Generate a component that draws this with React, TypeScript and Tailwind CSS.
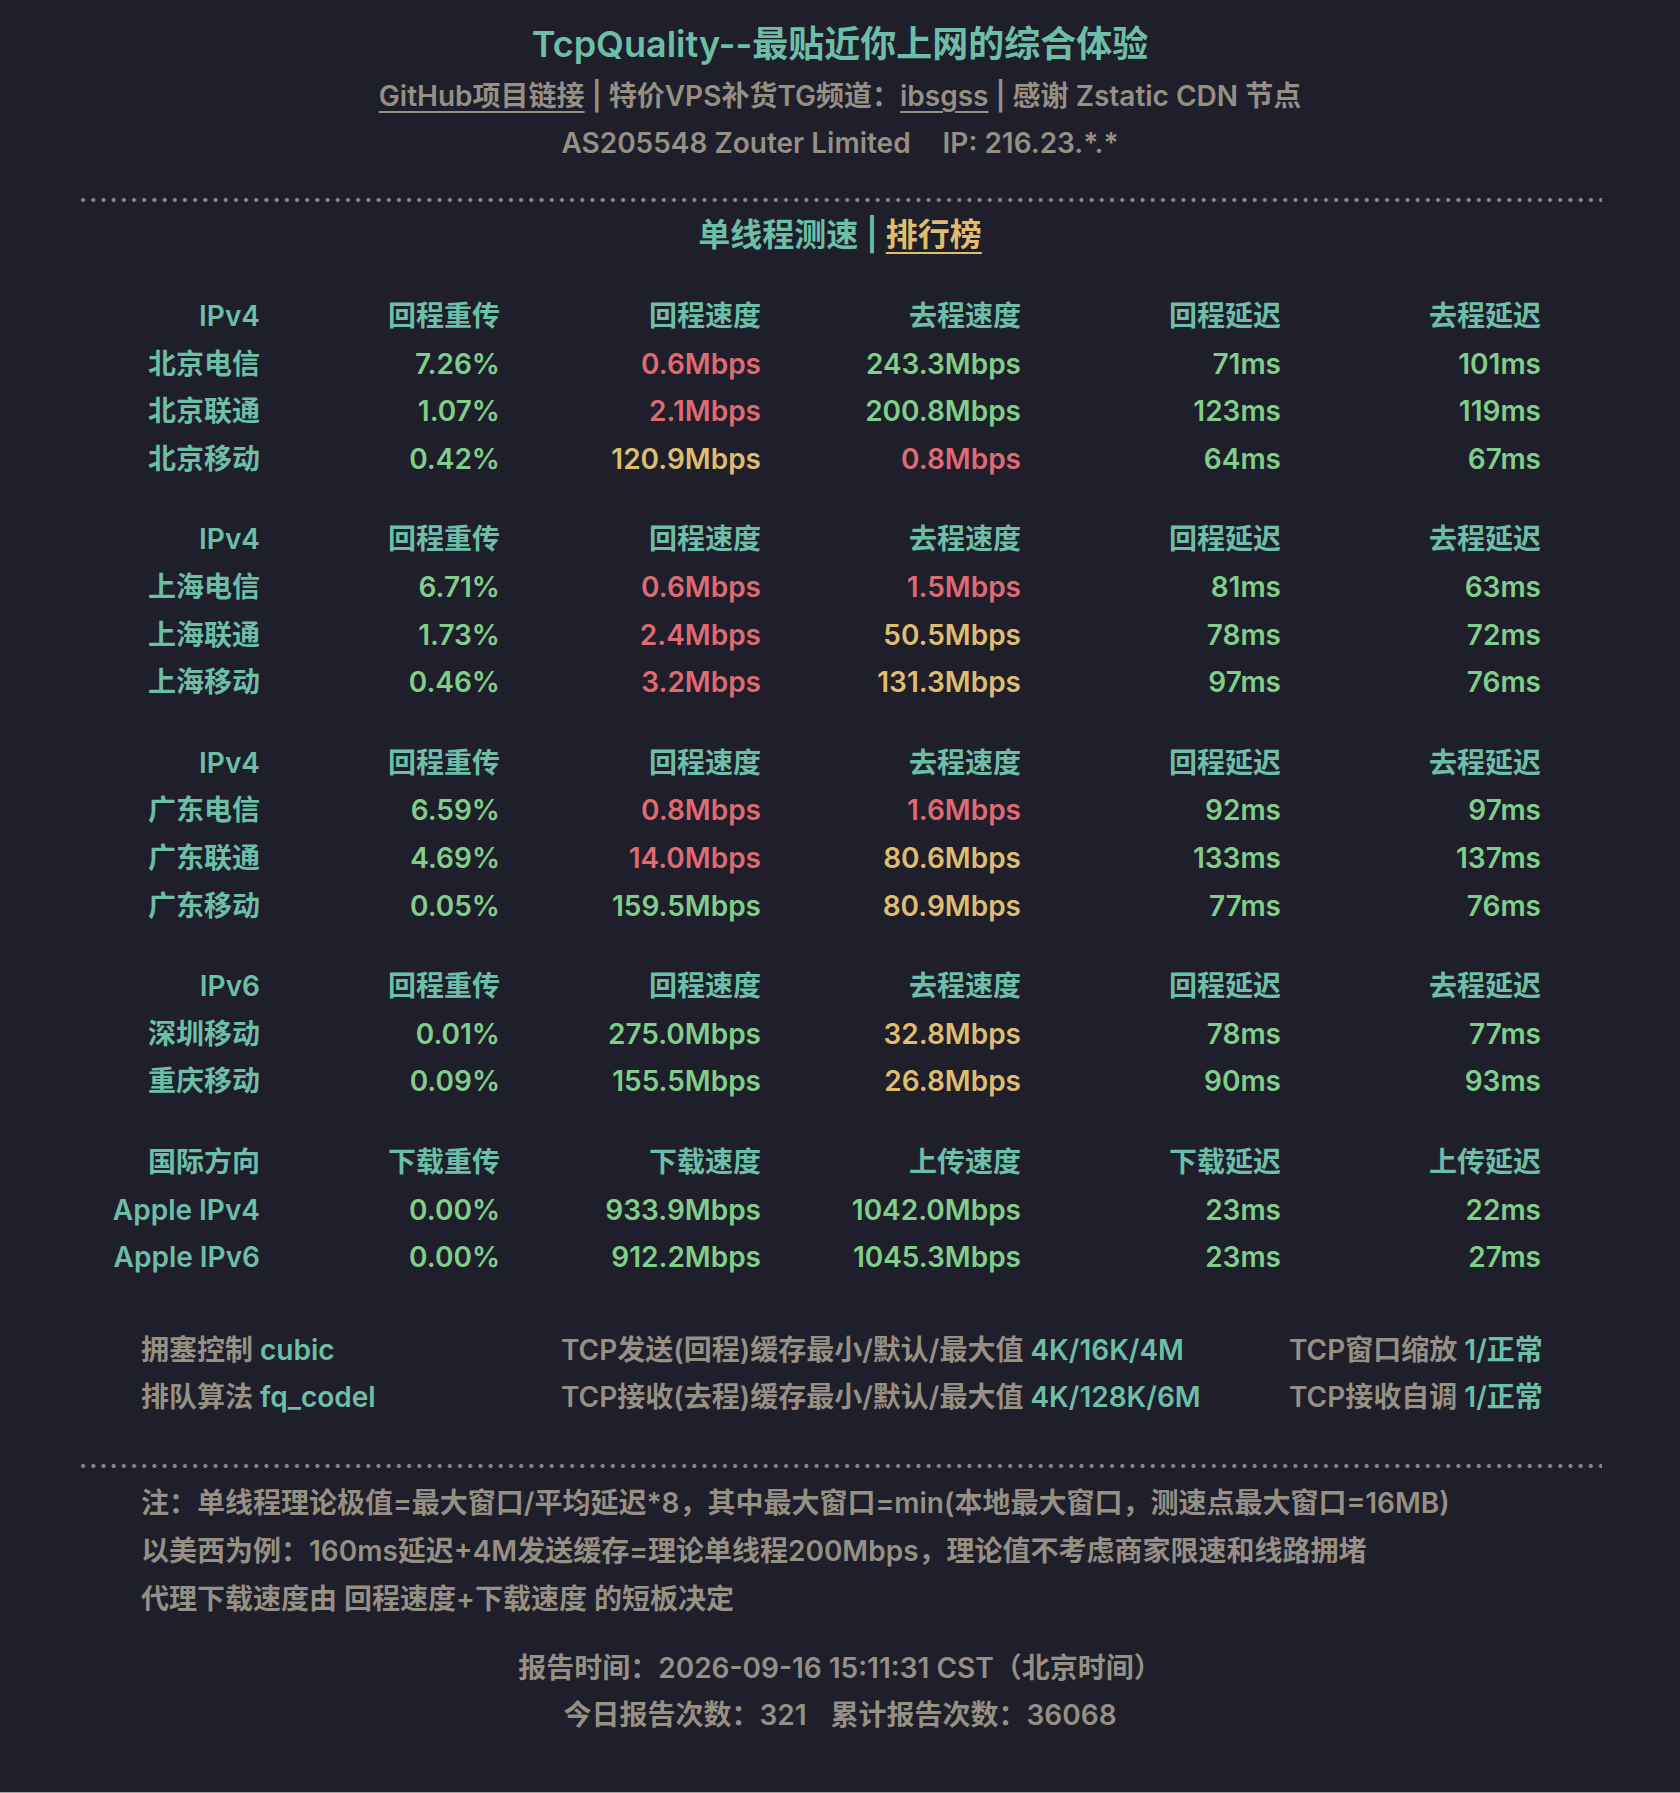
import React from "react";

type Tone = "g" | "r" | "y";

type Row = { name: string; cells: [string, Tone][] };

type Group = { head: string[]; rows: Row[] };

const toneClass: Record<Tone, string> = {
  g: "text-[#7fcf88]",
  r: "text-[#df6a72]",
  y: "text-[#dfbd6f]",
};

const speedHead = ["回程重传", "回程速度", "去程速度", "回程延迟", "去程延迟"];

const groups: Group[] = [
  {
    head: ["IPv4", ...speedHead],
    rows: [
      { name: "北京电信", cells: [["7.26%", "g"], ["0.6Mbps", "r"], ["243.3Mbps", "g"], ["71ms", "g"], ["101ms", "g"]] },
      { name: "北京联通", cells: [["1.07%", "g"], ["2.1Mbps", "r"], ["200.8Mbps", "g"], ["123ms", "g"], ["119ms", "g"]] },
      { name: "北京移动", cells: [["0.42%", "g"], ["120.9Mbps", "y"], ["0.8Mbps", "r"], ["64ms", "g"], ["67ms", "g"]] },
    ],
  },
  {
    head: ["IPv4", ...speedHead],
    rows: [
      { name: "上海电信", cells: [["6.71%", "g"], ["0.6Mbps", "r"], ["1.5Mbps", "r"], ["81ms", "g"], ["63ms", "g"]] },
      { name: "上海联通", cells: [["1.73%", "g"], ["2.4Mbps", "r"], ["50.5Mbps", "y"], ["78ms", "g"], ["72ms", "g"]] },
      { name: "上海移动", cells: [["0.46%", "g"], ["3.2Mbps", "r"], ["131.3Mbps", "y"], ["97ms", "g"], ["76ms", "g"]] },
    ],
  },
  {
    head: ["IPv4", ...speedHead],
    rows: [
      { name: "广东电信", cells: [["6.59%", "g"], ["0.8Mbps", "r"], ["1.6Mbps", "r"], ["92ms", "g"], ["97ms", "g"]] },
      { name: "广东联通", cells: [["4.69%", "g"], ["14.0Mbps", "r"], ["80.6Mbps", "y"], ["133ms", "g"], ["137ms", "g"]] },
      { name: "广东移动", cells: [["0.05%", "g"], ["159.5Mbps", "g"], ["80.9Mbps", "y"], ["77ms", "g"], ["76ms", "g"]] },
    ],
  },
  {
    head: ["IPv6", ...speedHead],
    rows: [
      { name: "深圳移动", cells: [["0.01%", "g"], ["275.0Mbps", "g"], ["32.8Mbps", "y"], ["78ms", "g"], ["77ms", "g"]] },
      { name: "重庆移动", cells: [["0.09%", "g"], ["155.5Mbps", "g"], ["26.8Mbps", "y"], ["90ms", "g"], ["93ms", "g"]] },
    ],
  },
  {
    head: ["国际方向", "下载重传", "下载速度", "上传速度", "下载延迟", "上传延迟"],
    rows: [
      { name: "Apple IPv4", cells: [["0.00%", "g"], ["933.9Mbps", "g"], ["1042.0Mbps", "g"], ["23ms", "g"], ["22ms", "g"]] },
      { name: "Apple IPv6", cells: [["0.00%", "g"], ["912.2Mbps", "g"], ["1045.3Mbps", "g"], ["23ms", "g"], ["27ms", "g"]] },
    ],
  },
];

const Dots = ({ className = "" }: { className?: string }) => (
  <div
    className={`h-[4px] w-full bg-[radial-gradient(circle,#8a857c_1.8px,transparent_2.2px)] bg-[length:10.2px_4px] bg-left ${className}`}
  />
);

const gridCols = "grid grid-cols-[182px_240px_261px_260px_260px_260px] text-right leading-[47.6px]";

const App = () => (
  <div className="h-[1793px] border-b border-[#a3a3a3] bg-[#1f1e2b] font-['Inter','Noto_Sans_CJK_SC',sans-serif] font-semibold text-[#968f84]">
    <div className="mx-auto w-[1524px] pt-4">
      <header className="text-center">
        <h1 className="text-[36px] leading-[56px] font-semibold text-[#6cbea6]">TcpQuality--最贴近你上网的综合体验</h1>
        <p className="text-[28px] leading-[48px]">
          <a className="underline underline-offset-[5px] decoration-2">GitHub项目链接</a> | 特价VPS补货TG频道：
          <a className="underline underline-offset-[5px] decoration-2">ibsgss</a> | 感谢 Zstatic CDN 节点
        </p>
        <p className="text-[28px] leading-[46px]">
          AS205548 Zouter Limited<span className="ml-8">IP: 216.23.*.*</span>
        </p>
      </header>

      <Dots className="mt-[32px]" />

      <div className="mt-[9px] text-center text-[32px] leading-[48px] text-[#6cbea6]">
        单线程测速 | <a className="text-[#dfbd6f] underline underline-offset-[6px] decoration-2">排行榜</a>
      </div>

      <section className="mt-[34px] flex flex-col gap-[33px] text-[28px]">
        {groups.map((g, gi) => (
          <div key={gi} className={gridCols}>
            {g.head.map((h) => (
              <div key={h} className="text-[#6cbea6]">{h}</div>
            ))}
            {g.rows.map((r) => (
              <React.Fragment key={r.name}>
                <div className="text-[#6cbea6]">{r.name}</div>
                {r.cells.map(([v, t], i) => (
                  <div key={i} className={toneClass[t]}>{v}</div>
                ))}
              </React.Fragment>
            ))}
          </div>
        ))}
      </section>

      <section className="mt-[45px] grid grid-cols-[420px_728px_1fr] pl-[63px] text-[28px] leading-[47px]">
        <div>拥塞控制 <span className="text-[#6cbea6]">cubic</span></div>
        <div>TCP发送(回程)缓存最小/默认/最大值 <span className="text-[#6cbea6]">4K/16K/4M</span></div>
        <div>TCP窗口缩放 <span className="text-[#6cbea6]">1/正常</span></div>
        <div>排队算法 <span className="text-[#6cbea6]">fq_codel</span></div>
        <div>TCP接收(去程)缓存最小/默认/最大值 <span className="text-[#6cbea6]">4K/128K/6M</span></div>
        <div>TCP接收自调 <span className="text-[#6cbea6]">1/正常</span></div>
      </section>

      <Dots className="mt-[43px]" />

      <section className="mt-[11px] pl-[63px] text-[28px] leading-[48px]">
        <p>注：单线程理论极值=最大窗口/平均延迟*8，其中最大窗口=min(本地最大窗口，测速点最大窗口=16MB)</p>
        <p>以美西为例：160ms延迟+4M发送缓存=理论单线程200Mbps，理论值不考虑商家限速和线路拥堵</p>
        <p>代理下载速度由 回程速度+下载速度 的短板决定</p>
      </section>

      <footer className="mt-[22px] text-center text-[28px] leading-[47px]">
        <p>报告时间：2026-09-16 15:11:31 CST（北京时间）</p>
        <p>
          今日报告次数：321<span className="ml-6">累计报告次数：36068</span>
        </p>
      </footer>
    </div>
  </div>
);

export default App;
